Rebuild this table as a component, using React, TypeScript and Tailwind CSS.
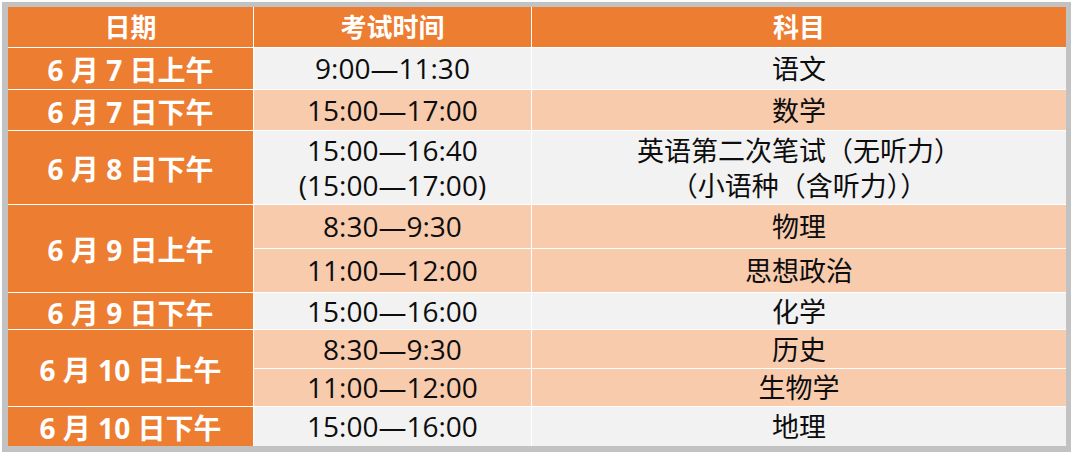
const rows: { time: string[]; subject: string[]; peach: boolean }[] = [
  { time: ['9:00—11:30'], subject: ['语文'], peach: false },
  { time: ['15:00—17:00'], subject: ['数学'], peach: true },
  { time: ['15:00—16:40', '(15:00—17:00)'], subject: ['英语第二次笔试（无听力）', '（小语种（含听力））'], peach: false },
  { time: ['8:30—9:30'], subject: ['物理'], peach: true },
  { time: ['11:00—12:00'], subject: ['思想政治'], peach: true },
  { time: ['15:00—16:00'], subject: ['化学'], peach: false },
  { time: ['8:30—9:30'], subject: ['历史'], peach: true },
  { time: ['11:00—12:00'], subject: ['生物学'], peach: true },
  { time: ['15:00—16:00'], subject: ['地理'], peach: false },
];

// date cells: label, first row index (grid row, header = 1), span
const dates: { label: string; row: number; span: number }[] = [
  { label: '6 月 7 日上午', row: 2, span: 1 },
  { label: '6 月 7 日下午', row: 3, span: 1 },
  { label: '6 月 8 日下午', row: 4, span: 1 },
  { label: '6 月 9 日上午', row: 5, span: 2 },
  { label: '6 月 9 日下午', row: 7, span: 1 },
  { label: '6 月 10 日上午', row: 8, span: 2 },
  { label: '6 月 10 日下午', row: 10, span: 1 },
];

const rowStart = ['', '', 'row-start-2', 'row-start-3', 'row-start-4', 'row-start-5', 'row-start-6', 'row-start-7', 'row-start-8', 'row-start-9', 'row-start-10'];

export default function App() {
  return (
    <div className="h-[462px] w-[1080px] bg-white pl-[2px] pt-[2px] font-['Open_Sans','Noto_Sans_CJK_SC',sans-serif]">
      <div className="inline-block border-b-[6px] border-l-[6px] border-r-[5px] border-t-[5px] border-[#c2c2c2]">
        <div className="grid grid-cols-[245px_277px_534px] grid-rows-[40px_41px_40px_73px_43px_43px_36px_38px_37px_39px] gap-px bg-white">
          {['日期', '考试时间', '科目'].map((h) => (
            <div key={h} className="flex items-center justify-center bg-[#ed7d31] text-[26px] font-bold text-white">
              {h}
            </div>
          ))}

          {dates.map((d) => (
            <div
              key={d.label}
              className={`col-start-1 ${rowStart[d.row]} ${d.span === 2 ? 'row-span-2' : ''} flex items-center justify-center bg-[#ed7d31] pt-[3px] text-[28px] font-bold text-white`}
            >
              {d.label}
            </div>
          ))}

          {rows.map((r, i) => (
            <div key={i} className="contents">
              <div
                className={`col-start-2 ${rowStart[i + 2]} flex flex-col items-center justify-center leading-[35px] text-[28px] text-[#0d0d0d] ${r.peach ? 'bg-[#f8cbad]' : 'bg-[#f2f2f2]'}`}
              >
                {r.time.map((t) => (
                  <span key={t}>{t}</span>
                ))}
              </div>
              <div
                className={`col-start-3 ${rowStart[i + 2]} flex flex-col items-center justify-center leading-[35px] text-[27px] text-[#0d0d0d] ${r.peach ? 'bg-[#f8cbad]' : 'bg-[#f2f2f2]'}`}
              >
                {r.subject.map((s) => (
                  <span key={s}>{s}</span>
                ))}
              </div>
            </div>
          ))}
        </div>
      </div>
    </div>
  );
}
